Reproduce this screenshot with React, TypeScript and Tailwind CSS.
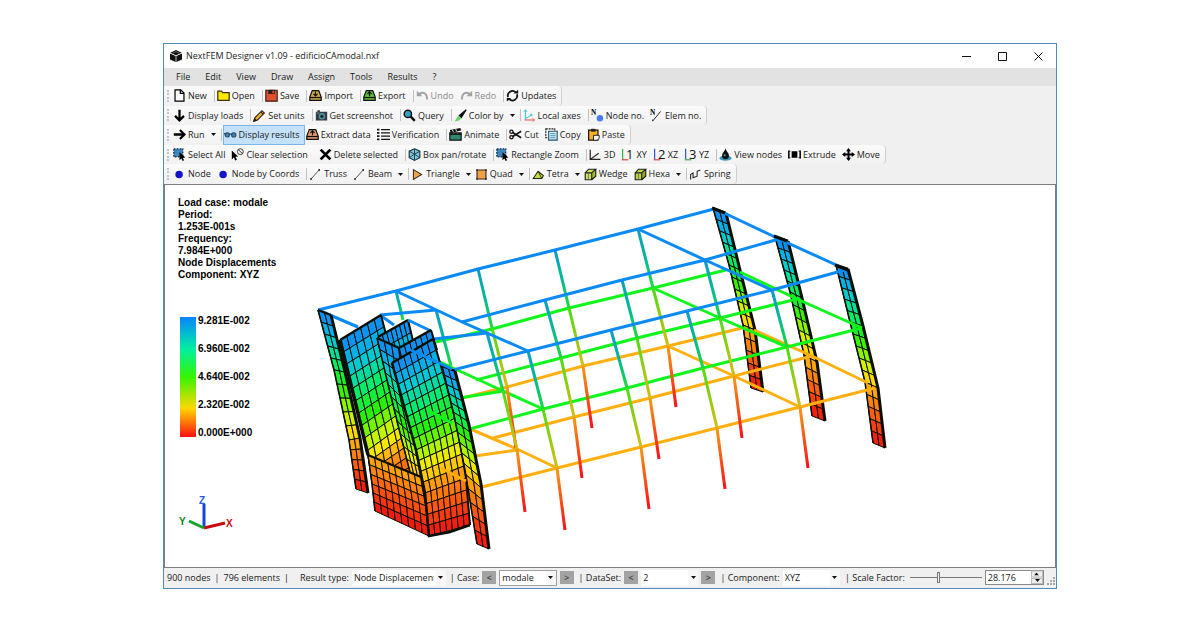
import React from "react";

type Point = [number, number];

/* ---------- Icons ---------- */

const Svg: React.FC<{ children: React.ReactNode }> = ({ children }) => (
  <svg viewBox="0 0 16 16" className="size-[13px] shrink-0 overflow-visible" fill="none" aria-hidden="true">
    {children}
  </svg>
);

const tray = (fill: string, arrow: string) => (
  <Svg>
    <path d="M4 2h8l3 8v4H1v-4z" fill={fill} stroke="#111" strokeWidth="1.5" />
    <path d="M1 10.5h14" stroke="#111" strokeWidth="1.5" />
    <path d={arrow} stroke="#111" strokeWidth="1.5" />
  </Svg>
);

const plane = (digit: string, vertical: string, horizontal: string) => (
  <Svg>
    <path d="M2 1v13" stroke={vertical} strokeWidth="1.5" />
    <path d="M1 14.5h8" stroke={horizontal} strokeWidth="1.5" />
    <text x="6" y="13" fontSize="16" fontFamily="Open Sans, sans-serif" fill="#111">
      {digit}
    </text>
  </Svg>
);

const marquee = (
  <Svg>
    <path d="M1 1h11v10H1z" fill="#3f86bd" stroke="#16314a" strokeWidth="1.6" strokeDasharray="2 1.6" />
    <path d="M8 5v10l2.3-2 1.6 3 1.8-1-1.6-2.8 3-.4z" fill="#000" />
  </Svg>
);

const cube = (fill: string, side: string) => (
  <Svg>
    <path d="M1.5 6v8.5h8V6z" fill={fill} />
    <path d="M1.5 6l4-4.5h9l-5 4.5z" fill={fill} />
    <path d="M9.5 6l5-4.5V10l-5 4.5z" fill={side} />
    <path d="M1.5 6h8v8.5h-8zM1.5 6l4-4.5h9l-5 4.5M14.5 1.5V10l-5 4.5" stroke="#222" strokeWidth="1.4" />
    <path d="M5.5 6v8.5" stroke="#667" strokeWidth="1" />
  </Svg>
);

const dot = (
  <Svg>
    <circle cx="7.5" cy="8" r="4.6" fill="#1414c8" />
  </Svg>
);

const line = (
  <Svg>
    <path d="M3 13L12 3" stroke="#333" strokeWidth="1" />
    <circle cx="2.5" cy="13.5" r="1.2" fill="#222" />
    <circle cx="12.5" cy="2.5" r="1.2" fill="#222" />
  </Svg>
);

const icons: Record<string, React.ReactNode> = {
  file: (
    <Svg>
      <path d="M2.5 1h7l4 4v10h-11z" fill="#fff" stroke="#000" strokeWidth="1.5" />
      <path d="M9 1v4.5h4.5" stroke="#000" strokeWidth="1.5" />
    </Svg>
  ),
  folder: (
    <Svg>
      <path d="M1 2.5h4.5l1.5 2h8v9.5H1z" fill="#ffe800" stroke="#3c3000" strokeWidth="1.5" />
    </Svg>
  ),
  save: (
    <Svg>
      <path d="M1 1.5h14V15H1z" fill="#e2512f" stroke="#3a1a14" strokeWidth="1.4" />
      <path d="M4 1h8v5H4z" fill="#222" />
      <path d="M9 2h2v3H9z" fill="#e2512f" />
    </Svg>
  ),
  import: tray("#cfa646", "M8 3v5M5.5 6L8 8.5 10.5 6"),
  export: tray("#5dbb3b", "M8 9V4M5.5 6L8 3.5 10.5 6"),
  extract: tray("#dc9a72", "M8 9V4M5.5 6L8 3.5 10.5 6"),
  undo: (
    <Svg>
      <path d="M3 7c5-5 11-2 10.5 6" stroke="#a3a3a3" strokeWidth="2.4" />
      <path d="M1 2v7h7z" fill="#a3a3a3" />
    </Svg>
  ),
  redo: (
    <Svg>
      <path d="M13 7C8 2 2 5 2.5 13" stroke="#a3a3a3" strokeWidth="2.4" />
      <path d="M15 2v7H8z" fill="#a3a3a3" />
    </Svg>
  ),
  updates: (
    <Svg>
      <path d="M2.5 10A5.8 5.8 0 0 1 12 4M13.5 6.5A5.8 5.8 0 0 1 4 12.5" stroke="#111" strokeWidth="2.2" />
      <path d="M9.5 5.5h5.5V1zM6.5 11H1v4.5z" fill="#111" />
    </Svg>
  ),
  down: (
    <Svg>
      <path d="M8 1v12M2.5 8.5L8 14l5.5-5.5" stroke="#000" strokeWidth="2.8" />
    </Svg>
  ),
  right: (
    <Svg>
      <path d="M1 8h12M8.5 2.5L14 8l-5.5 5.5" stroke="#000" strokeWidth="2.8" />
    </Svg>
  ),
  pencil: (
    <Svg>
      <path d="M1 15l1.5-4.5L11 2l3 3-8.5 8.5z" fill="#f2b63c" stroke="#2d1d05" strokeWidth="1.3" />
      <path d="M9.5 3.5l3 3M1 15l1-3 2 2z" stroke="#2d1d05" strokeWidth="1.3" fill="#111" />
    </Svg>
  ),
  camera: (
    <Svg>
      <path d="M1 3.5h14V14H1zM3 1.5h3v2H3z" fill="#333b3f" />
      <circle cx="8.5" cy="9" r="4" fill="#4d8fa0" />
      <circle cx="8.5" cy="9" r="2" fill="#15262c" />
      <path d="M2 5h3" stroke="#9aa" strokeWidth="1" />
    </Svg>
  ),
  search: (
    <Svg>
      <circle cx="6" cy="6" r="4.5" fill="#3aa0c0" stroke="#111" strokeWidth="1.8" />
      <path d="M9.5 9.5l5 5" stroke="#111" strokeWidth="3" />
    </Svg>
  ),
  brush: (
    <Svg>
      <path d="M15 1L6.5 8l2.5 2.5z" fill="#111" stroke="#111" strokeWidth="1.4" />
      <path d="M6 8.5l2.5 2.5C7.5 14.5 4 15 .5 15c2.5-1.5 2-5.5 5.5-6.5z" fill="#6fd36c" />
    </Svg>
  ),
  axes: (
    <Svg>
      <path d="M3 1v12M1 3.5L3 1l2 2.5M3 12l8-5M8.5 6.5H11v2.5" stroke="#35c6cf" strokeWidth="1.2" />
      <path d="M2 13.5h12M12 11.5l2 2-2 2" stroke="#ea4a4a" strokeWidth="1.2" />
    </Svg>
  ),
  nodeNo: (
    <Svg>
      <text x="0" y="7" fontSize="9" fontWeight="700" fontFamily="Liberation Serif, serif" fill="#000">N</text>
      <circle cx="11" cy="11.5" r="4" fill="#4a7cf0" />
    </Svg>
  ),
  elemNo: (
    <Svg>
      <text x="0" y="7" fontSize="9" fontWeight="700" fontFamily="Liberation Serif, serif" fill="#000">N</text>
      <path d="M4 14L13 3" stroke="#222" strokeWidth="1.2" />
      <circle cx="3.5" cy="14" r="1" fill="#222" />
    </Svg>
  ),
  glasses: (
    <Svg>
      <circle cx="4" cy="8.5" r="2.6" fill="#4b87ad" stroke="#234a66" strokeWidth="1.4" />
      <circle cx="12" cy="8.5" r="2.6" fill="#4b87ad" stroke="#234a66" strokeWidth="1.4" />
      <path d="M6 7.5h4M0 7h2" stroke="#234a66" strokeWidth="1.4" />
    </Svg>
  ),
  list: (
    <Svg>
      <path d="M5 2h11M5 6h11M5 10h11M5 14h11" stroke="#111" strokeWidth="1.8" />
      <path d="M0 2h3M0 6h3M0 10h3M0 14h3" stroke="#111" strokeWidth="2.2" />
    </Svg>
  ),
  clapper: (
    <Svg>
      <path d="M1 6h14v9H1z" fill="#2d8a70" stroke="#111" strokeWidth="1.4" />
      <path d="M1 2.5L14 0l1 3-13 3z" fill="#111" />
      <path d="M4 2l1.5 3M8 1l1.5 3M4 8l2-2M9 8l2-2" stroke="#ddd" strokeWidth="1.2" />
      <path d="M1 7.5h14" stroke="#111" strokeWidth="2" />
    </Svg>
  ),
  cut: (
    <Svg>
      <circle cx="3" cy="4.5" r="2" stroke="#111" strokeWidth="1.6" />
      <circle cx="3" cy="11.5" r="2" stroke="#111" strokeWidth="1.6" />
      <path d="M4.5 5.5L15 12M4.5 10.5L15 4" stroke="#111" strokeWidth="2" />
    </Svg>
  ),
  copy: (
    <Svg>
      <path d="M1 1h11v11H1z" fill="#fff" stroke="#222" strokeWidth="1.4" strokeDasharray="2.5 1" />
      <path d="M4.5 4h10.5v11H4.5z" fill="#dff1fb" stroke="#23536e" strokeWidth="1.4" />
      <path d="M6.5 7h6.5M6.5 9.5h6.5M6.5 12h6.5" stroke="#3b8ebc" strokeWidth="1.2" />
    </Svg>
  ),
  paste: (
    <Svg>
      <path d="M2 2.5h11.5V15H2z" fill="#f5b12c" stroke="#1d1607" strokeWidth="1.5" />
      <path d="M5 1h5.5v3.5H5z" fill="#222" />
      <path d="M8 9h7v3.5L12.5 15H8z" fill="#fff" stroke="#222" strokeWidth="1.2" />
    </Svg>
  ),
  marquee,
  clear: (
    <Svg>
      <path d="M1 3v11l2.5-2.3L5.3 15.5l2-1-1.8-3.6 3.3-.3z" fill="#000" />
      <circle cx="11.5" cy="4.5" r="3.6" stroke="#333" strokeWidth="1.2" />
      <path d="M9 2l5 5" stroke="#333" strokeWidth="1.2" />
    </Svg>
  ),
  cross: (
    <Svg>
      <path d="M2 2l12 12M14 2L2 14" stroke="#000" strokeWidth="3.4" />
    </Svg>
  ),
  box: (
    <Svg>
      <path d="M8 1l6.5 3v8L8 15.3 1.5 12V4z" fill="#7fc4dd" stroke="#1c3945" strokeWidth="1.5" />
      <path d="M1.5 4L8 7.5 14.5 4M8 7.5V15M8 1v6.5M1.5 12L8 7.5l6.5 4.5" stroke="#1c3945" strokeWidth="1.1" />
    </Svg>
  ),
  view3d: (
    <Svg>
      <path d="M1.5 2v12H14M1.5 14L12 6.5" stroke="#222" strokeWidth="1.5" />
    </Svg>
  ),
  xy: plane("1", "#35b04a", "#e04848"),
  xz: plane("2", "#3357d8", "#e04848"),
  yz: plane("3", "#3357d8", "#35b04a"),
  viewNodes: (
    <Svg>
      <ellipse cx="8" cy="12.5" rx="7.3" ry="3.2" fill="#3c9cb8" />
      <path d="M8 .5C9 4 12.3 6 12.3 9.5a4.3 4.3 0 0 1-8.6 0C3.7 6 7 4 8 .5z" fill="#0b1215" />
      <circle cx="7" cy="9" r="1.3" fill="#789" />
    </Svg>
  ),
  extrude: (
    <Svg>
      <path d="M1 3v10M15 3v10" stroke="#111" strokeWidth="2" />
      <path d="M4.5 4h7v8h-7z" fill="#000" />
      <path d="M1 4h2M13 4h2M1 12h2M13 12h2" stroke="#111" strokeWidth="1" />
    </Svg>
  ),
  move: (
    <Svg>
      <path d="M8 2v12M2 8h12" stroke="#000" strokeWidth="2.4" />
      <path d="M8 0l3 4H5zM8 16l3-4H5zM0 8l4-3v6zM16 8l-4-3v6z" fill="#000" />
    </Svg>
  ),
  dot,
  line,
  triangle: (
    <Svg>
      <path d="M3 2l10 6-10 6z" fill="#eda655" stroke="#3a2a18" strokeWidth="1.3" />
    </Svg>
  ),
  quad: (
    <Svg>
      <path d="M2.5 2.5h11v11h-11z" fill="#f0a04b" stroke="#3a2a18" strokeWidth="1.4" />
      <path d="M1.5 1.5h2v2h-2zM12.5 1.5h2v2h-2zM1.5 12.5h2v2h-2zM12.5 12.5h2v2h-2z" fill="#222" />
    </Svg>
  ),
  tetra: (
    <Svg>
      <path d="M1.5 13L7.5 4l6.5 5.5-2 3.5z" fill="#c9dc3a" stroke="#222" strokeWidth="1.3" />
      <path d="M7.5 4L12 13" stroke="#222" strokeWidth="1.1" />
    </Svg>
  ),
  wedge: cube("#cfe05a", "#a5bd2d"),
  hexa: cube("#bfd63a", "#90ab22"),
  spring: (
    <Svg>
      <path d="M2 14V8l3-2v6l5-2V4l4-1.5" stroke="#222" strokeWidth="1.3" />
    </Svg>
  ),
};

/* ---------- Toolbars ---------- */

type Tool =
  | "|"
  | "gap"
  | { icon: string; label: string; menu?: boolean; disabled?: boolean; active?: boolean };

const toolbars: Tool[][] = [
  [
    { icon: "file", label: "New" },
    "|",
    { icon: "folder", label: "Open" },
    "|",
    { icon: "save", label: "Save" },
    "|",
    { icon: "import", label: "Import" },
    "|",
    { icon: "export", label: "Export" },
    "|",
    { icon: "undo", label: "Undo", disabled: true },
    { icon: "redo", label: "Redo", disabled: true },
    "|",
    { icon: "updates", label: "Updates" },
  ],
  [
    { icon: "down", label: "Display loads" },
    "|",
    { icon: "pencil", label: "Set units" },
    "|",
    { icon: "camera", label: "Get screenshot" },
    "|",
    { icon: "search", label: "Query" },
    "|",
    { icon: "brush", label: "Color by", menu: true },
    "|",
    { icon: "axes", label: "Local axes" },
    "|",
    { icon: "nodeNo", label: "Node no." },
    { icon: "elemNo", label: "Elem no." },
  ],
  [
    { icon: "right", label: "Run", menu: true },
    "|",
    { icon: "glasses", label: "Display results", active: true },
    { icon: "extract", label: "Extract data" },
    { icon: "list", label: "Verification" },
    "|",
    { icon: "clapper", label: "Animate" },
    "|",
    { icon: "cut", label: "Cut" },
    { icon: "copy", label: "Copy" },
    { icon: "paste", label: "Paste" },
  ],
  [
    { icon: "marquee", label: "Select All" },
    { icon: "clear", label: "Clear selection" },
    "gap",
    { icon: "cross", label: "Delete selected" },
    "|",
    { icon: "box", label: "Box pan/rotate" },
    "|",
    { icon: "marquee", label: "Rectangle Zoom" },
    "|",
    { icon: "view3d", label: "3D" },
    { icon: "xy", label: "XY" },
    { icon: "xz", label: "XZ" },
    { icon: "yz", label: "YZ" },
    "|",
    { icon: "viewNodes", label: "View nodes" },
    { icon: "extrude", label: "Extrude" },
    { icon: "move", label: "Move" },
  ],
  [
    { icon: "dot", label: "Node" },
    { icon: "dot", label: "Node by Coords" },
    "|",
    { icon: "line", label: "Truss" },
    { icon: "line", label: "Beam", menu: true },
    "|",
    { icon: "triangle", label: "Triangle", menu: true },
    { icon: "quad", label: "Quad", menu: true },
    "|",
    { icon: "tetra", label: "Tetra", menu: true },
    { icon: "wedge", label: "Wedge" },
    { icon: "hexa", label: "Hexa", menu: true },
    "|",
    { icon: "spring", label: "Spring" },
  ],
];

const Caret: React.FC = () => (
  <svg viewBox="0 0 5 3" className="h-[3px] w-[5px] shrink-0" aria-hidden="true">
    <path d="M0 0h5L2.5 3z" fill="#111" />
  </svg>
);

const Toolbar: React.FC<{ tools: Tool[] }> = ({ tools }) => (
  <div className="flex">
    <div className="flex items-center rounded-r-sm border-r border-[#cfcfcf] bg-linear-to-b from-[#fbfbfb] to-[#f1f1f1] pl-[3px]">
      <span className="mr-[3px] h-3 border-l-2 border-dotted border-[#c4c4c4]" />
      {tools.map((tool, i) => {
        if (tool === "|") return <span key={i} className="ml-[2px] mr-px h-3 w-px bg-[#c2c2c2]" />;
        if (tool === "gap") return <span key={i} className="w-[5px]" />;
        return (
          <button
            key={i}
            type="button"
            disabled={tool.disabled}
            className={`flex h-full items-center gap-[2px] whitespace-nowrap border ${tool.menu ? "pr-[2px]" : "pr-1"} ${
              tool.active ? "border-[#7fb4e2] bg-[#c4e1fb]" : "border-transparent"
            } ${tool.disabled ? "text-[#8b8b8b]" : "text-[#1a1a1a]"}`}
          >
            {icons[tool.icon]}
            <span>{tool.label}</span>
            {tool.menu && (
              <span className="pl-1">
                <Caret />
              </span>
            )}
          </button>
        );
      })}
    </div>
  </div>
);

/* ---------- Model ---------- */

const ramp: [number, number[]][] = [
  [0, [20, 130, 245]],
  [0.14, [0, 195, 225]],
  [0.27, [0, 235, 125]],
  [0.42, [40, 240, 0]],
  [0.54, [190, 245, 0]],
  [0.62, [255, 230, 0]],
  [0.7, [255, 165, 15]],
  [0.84, [255, 90, 15]],
  [1, [240, 15, 15]],
];

const colorAt = (t: number) => {
  const i = Math.max(1, ramp.findIndex(([stop]) => stop >= t));
  const [t0, a] = ramp[i - 1];
  const [t1, b] = ramp[i];
  const k = (t - t0) / (t1 - t0);
  return `rgb(${a.map((v, n) => Math.round(v + (b[n] - v) * k)).join(",")})`;
};

const along = (pts: Point[], t: number): Point => {
  const s = t * (pts.length - 1);
  const i = Math.min(pts.length - 2, Math.floor(s));
  const k = s - i;
  return [
    pts[i][0] + (pts[i + 1][0] - pts[i][0]) * k,
    pts[i][1] + (pts[i + 1][1] - pts[i][1]) * k,
  ];
};

interface MeshProps {
  left: Point[];
  right: Point[];
  cols: number;
  rows: number;
  from?: number;
  to?: number;
  edge?: number;
}

const Mesh: React.FC<MeshProps> = ({ left, right, cols, rows, from = 0, to = 1, edge = 2 }) => {
  const at = (c: number, r: number): Point => along([along(left, r / rows), along(right, r / rows)], c / cols);
  const cells: React.ReactNode[] = [];
  for (let r = 0; r < rows; r++) {
    for (let c = 0; c < cols; c++) {
      const quad = [at(c, r), at(c + 1, r), at(c + 1, r + 1), at(c, r + 1)];
      cells.push(
        <polygon
          key={`${r}-${c}`}
          points={quad.join(" ")}
          fill={colorAt(Math.min(0.999, from + ((to - from) * (r + 0.5)) / rows))}
        />
      );
    }
  }
  return (
    <g stroke="#0a0f05" strokeWidth="1" strokeLinejoin="round">
      {cells}
      <polyline points={right.join(" ")} fill="none" strokeWidth={edge} />
      <polyline points={left.join(" ")} fill="none" strokeWidth="1.5" />
      <polyline points={[left[0], right[0]].join(" ")} fill="none" strokeWidth="2.4" />
    </g>
  );
};

const BLUE = "#0a8af5";
const GREEN = "#10f51c";
const ORANGE = "#ffb010";

const beams: [string, Point[]][] = [
  [ORANGE, [[458, 399], [507, 387], [583, 366], [668, 346], [742, 328]]],
  [ORANGE, [[493, 438], [574, 417], [650, 398], [734, 376], [812, 356]]],
  [ORANGE, [[482, 487], [557, 468], [641, 447], [717, 428], [800, 407], [875, 388]]],
  [ORANGE, [[468, 428], [517, 449], [557, 468]]],
  [ORANGE, [[475, 456], [517, 450]]],
  [ORANGE, [[668, 346], [734, 376], [800, 407]]],
  [ORANGE, [[754, 330], [812, 356], [868, 383]]],
  [GREEN, [[436, 342], [492, 329], [569, 308], [653, 288], [726, 270]]],
  [GREEN, [[476, 380], [561, 358], [637, 338], [720, 318], [797, 299]]],
  [GREEN, [[466, 430], [543, 409], [627, 388], [703, 368], [787, 347], [862, 328]]],
  [GREEN, [[440, 362], [503, 391], [543, 409]]],
  [GREEN, [[460, 398], [503, 391]]],
  [GREEN, [[653, 288], [720, 318], [787, 347]]],
  [GREEN, [[740, 272], [797, 299], [862, 328]]],
];

const roof: Point[][] = [
  [[318, 310], [396, 291], [478, 269], [555, 250], [638, 229], [714, 209]],
  [[462, 322], [545, 300], [622, 280], [705, 260], [779, 239]],
  [[453, 370], [528, 351], [611, 330], [687, 311], [772, 290], [845, 270]],
  [[396, 291], [462, 322], [528, 351]],
  [[638, 229], [705, 260], [772, 290]],
  [[720, 211], [779, 239], [845, 269]],
  [[318, 310], [358, 327]],
  [[380, 315], [436, 310]],
  [[380, 315], [394, 325]],
  [[434, 339], [487, 333]],
];

const columns: Point[][] = [
  [[478, 269], [492, 328], [507, 387], [516, 448]],
  [[555, 250], [569, 308], [583, 366], [592, 428]],
  [[638, 229], [653, 288], [668, 346], [676, 407]],
  [[545, 300], [561, 358], [574, 417], [582, 478]],
  [[622, 280], [637, 338], [650, 398], [659, 459]],
  [[705, 260], [720, 318], [734, 376], [742, 438]],
  [[487, 333], [503, 391], [517, 449], [525, 512]],
  [[528, 351], [543, 409], [557, 468], [565, 530]],
  [[611, 330], [627, 388], [641, 447], [649, 509]],
  [[687, 311], [703, 368], [717, 428], [725, 489]],
  [[772, 290], [787, 347], [800, 407], [808, 468]],
  [[436, 310], [451, 366]],
  [[396, 291], [403, 320]],
];

const storeys = ["url(#storey3)", "url(#storey2)", "url(#storey1)"];

const Model: React.FC = () => (
  <svg viewBox="165 185 890 382" className="block h-auto w-full" role="img" aria-label="Deformed model">
    <defs>
      <linearGradient id="storey3" x1="0" y1="0" x2="0" y2="1">
        <stop offset="0" stopColor="#0c9cc8" />
        <stop offset="0.5" stopColor="#08b894" />
        <stop offset="1" stopColor="#18dc38" />
      </linearGradient>
      <linearGradient id="storey2" x1="0" y1="0" x2="0" y2="1">
        <stop offset="0" stopColor="#4bdc14" />
        <stop offset="1" stopColor="#d6bc14" />
      </linearGradient>
      <linearGradient id="storey1" x1="0" y1="0" x2="0" y2="1">
        <stop offset="0" stopColor="#f59a14" />
        <stop offset="1" stopColor="#f8101a" />
      </linearGradient>
    </defs>

    {/* Shear walls on the far side */}
    <Mesh left={[[713, 208], [729, 265], [743, 325], [751, 388]]} right={[[726, 213], [740, 270], [755, 330], [763, 392]]} cols={2} rows={15} edge={3} />
    <Mesh left={[[775, 237], [790, 292], [804, 355], [812, 416]]} right={[[788, 241], [802, 298], [817, 362], [825, 421]]} cols={2} rows={15} edge={3} />
    <Mesh left={[[836, 265], [850, 322], [865, 382], [873, 443]]} right={[[848, 269], [863, 326], [878, 388], [885, 448]]} cols={2} rows={15} edge={3} />

    <g fill="none" strokeWidth="3">
      {beams.map(([color, pts], i) => (
        <polyline key={i} points={pts.join(" ")} stroke={color} />
      ))}
      {columns.map((pts, i) =>
        pts.slice(1).map((p, n) => (
          <line key={`${i}-${n}`} x1={pts[n][0]} y1={pts[n][1]} x2={p[0]} y2={p[1]} stroke={storeys[n]} />
        ))
      )}
      {roof.map((pts, i) => (
        <polyline key={i} points={pts.join(" ")} stroke={BLUE} />
      ))}
    </g>
    <path d="M712 208l13 5M774 236l13 5M835 265l13 5" stroke="#0a0f05" strokeWidth="3" />

    {/* Left wall and lift core */}
    <Mesh left={[[318, 310], [334, 370], [349, 440], [356, 489]]} right={[[331, 315], [345, 372], [360, 438], [368, 493]]} cols={2} rows={15} edge={3} />
    <Mesh left={[[340, 340], [354, 397], [368, 455], [375, 500]]} right={[[381, 315], [395, 370], [409, 425], [420, 472]]} cols={6} rows={14} to={0.9} />
    <polyline points="340,340 354,397 368,455" fill="none" stroke="#0a0f05" strokeWidth="3.5" />
    <Mesh left={[[378, 337], [385, 362]]} right={[[408, 320], [414, 345]]} cols={7} rows={2} to={0.14} />
    <path d="M408 320L431 331" stroke={BLUE} strokeWidth="3" />
    <Mesh left={[[377, 338], [387, 380], [398, 425], [410, 472]]} right={[[399, 348], [405, 398], [414, 440], [421, 477]]} cols={3} rows={11} to={0.68} />
    <Mesh left={[[399, 348], [404, 368]]} right={[[431, 330], [437, 350]]} cols={6} rows={2} to={0.1} />
    <Mesh left={[[368, 455], [372, 484], [375, 511]]} right={[[421, 477], [426, 506], [429, 536]]} cols={8} rows={6} from={0.68} />
    <Mesh left={[[392, 363], [404, 406], [416, 450], [425, 493], [429, 536]]} right={[[433, 339], [446, 383], [458, 430], [466, 478], [470, 525]]} cols={7} rows={16} />
    <polyline points="392,363 404,406 416,450 425,493 429,536 450,532 470,525" fill="none" stroke="#0a0f05" strokeWidth="2.5" />
    <Mesh left={[[442, 366], [454, 415], [465, 470], [477, 544]]} right={[[455, 371], [469, 425], [481, 484], [489, 549]]} cols={2} rows={16} edge={3} />
    <g strokeWidth="3">
      <path d="M411 350L452 369" stroke={BLUE} />
      <path d="M429 411L452 423" stroke={GREEN} />
      <path d="M441 468L466 481" stroke={ORANGE} />
    </g>

    {/* Axis triad */}
    <g strokeWidth="3">
      <path d="M204 528V504" stroke="#1744e0" />
      <path d="M204 528L225 523" stroke="#c60c12" />
      <path d="M204 528L189 521" stroke="#10a524" />
    </g>
    <g fontFamily="Liberation Sans, Arial, sans-serif" fontSize="10" fontWeight="700">
      <text x="199" y="504" fill="#2a5ce8">Z</text>
      <text x="226" y="527" fill="#c60c12">X</text>
      <text x="179" y="525" fill="#0c8420">Y</text>
    </g>
  </svg>
);

const caseInfo = [
  "Load case: modale",
  "Period:",
  "1.253E-001s",
  "Frequency:",
  "7.984E+000",
  "Node Displacements",
  "Component: XYZ",
];

const legend = ["9.281E-002", "6.960E-002", "4.640E-002", "2.320E-002", "0.000E+000"];

const Viewport: React.FC = () => (
  <main className="relative border border-[#7d7d7d] bg-white">
    <Model />
    <div className="absolute left-[13px] top-3 font-['Liberation_Sans',Arial,sans-serif] text-[10px] font-bold leading-3 text-black">
      {caseInfo.map((text) => (
        <p key={text}>{text}</p>
      ))}
      <div className="mt-[34px] flex items-center gap-[2px] pl-[2px]">
        <div className="h-[120px] w-4 bg-[linear-gradient(to_bottom,#0a84ff,#00f0a0_27%,#35f500_50%,#ffd800_76%,#ff1010)]" />
        <ul className="flex flex-col gap-4">
          {legend.map((value) => (
            <li key={value}>{value}</li>
          ))}
        </ul>
      </div>
    </div>
  </main>
);

/* ---------- Status bar ---------- */

const Picker: React.FC<{ label: string; value: string; className: string }> = ({ label, value, className }) => (
  <span className={`relative flex h-4 items-center bg-white ${className}`}>
    <select aria-label={label} defaultValue={value} className="h-full w-full appearance-none overflow-hidden bg-transparent pl-[2px] pr-3 outline-none">
      <option>{value}</option>
    </select>
    <span className="pointer-events-none absolute inset-y-0 right-0 flex w-[10px] items-center justify-center bg-[#f7f7f7]">
      <Caret />
    </span>
  </span>
);

const Step: React.FC<{ label: string; children: string }> = ({ label, children }) => (
  <button type="button" aria-label={label} className="h-[13px] w-[14px] shrink-0 bg-[#a3a3a3] leading-3 text-[#222]">
    {children}
  </button>
);

const StatusBar: React.FC = () => (
  <footer className="flex h-5 items-center gap-[3px] whitespace-nowrap bg-[#f0f0f0] pb-px pl-[3px]">
    <span className="mr-2 flex gap-1">
      <span>900 nodes</span>
      <span>|</span>
      <span>796 elements</span>
      <span>|</span>
    </span>
    <span>Result type:</span>
    <Picker label="Result type" value="Node Displacements" className="w-[95px]" />
    <span className="pl-px">| Case:</span>
    <Step label="Previous case">&lt;</Step>
    <Picker label="Case" value="modale" className="w-[58px] border border-[#a0a0a0]" />
    <Step label="Next case">&gt;</Step>
    <span className="pl-[2px]">| DataSet:</span>
    <Step label="Previous data set">&lt;</Step>
    <Picker label="DataSet" value="2" className="w-[58px]" />
    <Step label="Next data set">&gt;</Step>
    <span className="pl-[2px]">| Component:</span>
    <Picker label="Component" value="XYZ" className="w-[58px]" />
    <label htmlFor="scale" className="px-[2px]">
      | Scale Factor:
    </label>
    <input
      id="scale"
      type="range"
      defaultValue={39}
      className="h-3 w-[72px] appearance-none bg-transparent [&::-webkit-slider-runnable-track]:h-px [&::-webkit-slider-runnable-track]:bg-[#777] [&::-webkit-slider-thumb]:-mt-[5px] [&::-webkit-slider-thumb]:h-[11px] [&::-webkit-slider-thumb]:w-[3px] [&::-webkit-slider-thumb]:appearance-none [&::-webkit-slider-thumb]:border [&::-webkit-slider-thumb]:border-[#777] [&::-webkit-slider-thumb]:bg-[#f4f4f4]"
    />
    <span className="ml-auto flex h-[15px] w-[60px] border border-[#8a8a8a] bg-white">
      <input aria-label="Scale value" defaultValue="28.176" className="w-full min-w-0 pl-[2px] outline-none" />
      <span className="flex w-3 shrink-0 flex-col bg-[#eee]">
        <button type="button" aria-label="Increase" className="flex flex-1 rotate-180 items-center justify-center border border-[#bbb]">
          <Caret />
        </button>
        <button type="button" aria-label="Decrease" className="flex flex-1 items-center justify-center border border-[#bbb]">
          <Caret />
        </button>
      </span>
    </span>
    <svg viewBox="0 0 9 9" className="mt-2 size-[9px] shrink-0" fill="#a8a8a8" aria-hidden="true">
      <path d="M6 0h2v2H6zM3 3h2v2H3zM6 3h2v2H6zM0 6h2v2H0zM3 6h2v2H3zM6 6h2v2H6z" />
    </svg>
  </footer>
);

const menus = ["File", "Edit", "View", "Draw", "Assign", "Tools", "Results", "?"];

export default function App() {
  return (
    <div className="min-h-screen bg-white pb-10 pl-5 pt-[43px] font-['Open_Sans','Noto_Sans',sans-serif] text-[9px] text-[#1a1a1a]">
      <div className="mx-auto max-w-[894px] border border-[#4b8db8] bg-[#f0f0f0]">
        <header className="flex h-6 items-center bg-white pl-[6px]">
          <svg viewBox="0 0 16 16" className="mr-1 size-3" aria-hidden="true">
            <path d="M8 0l7.5 3.5L8 7 .5 3.5zM0 4.5L7.5 8v8L0 12.5zM16 4.5L8.5 8v8l7.5-3.5z" fill="#111" />
            <path d="M4 4l4-2 4 2" stroke="#777" fill="none" />
          </svg>
          <h1>NextFEM Designer v1.09 - edificioCAmodal.nxf</h1>
          <div className="ml-auto flex">
            <button type="button" aria-label="Minimize" className="flex w-9 items-center justify-center">
              <svg viewBox="0 0 9 9" className="size-[9px]" stroke="#111" fill="none">
                <path d="M0 4.5h9" />
              </svg>
            </button>
            <button type="button" aria-label="Maximize" className="flex w-9 items-center justify-center">
              <svg viewBox="0 0 9 9" className="size-[9px]" stroke="#111" fill="none">
                <path d="M.5.5h8v8h-8z" />
              </svg>
            </button>
            <button type="button" aria-label="Close" className="flex w-9 items-center justify-center">
              <svg viewBox="0 0 9 9" className="size-[9px]" stroke="#111" fill="none">
                <path d="M.5.5l8 8M8.5.5l-8 8" />
              </svg>
            </button>
          </div>
        </header>
        <nav className="flex h-[18px] items-center gap-px bg-[#e2e2e2] pl-[5px]">
          {menus.map((name) => (
            <button key={name} type="button" className="px-[7px]">
              {name}
            </button>
          ))}
        </nav>
        <div className="grid h-[98px] grid-rows-5">
          {toolbars.map((tools, i) => (
            <Toolbar key={i} tools={tools} />
          ))}
        </div>
        <Viewport />
        <StatusBar />
      </div>
    </div>
  );
}
